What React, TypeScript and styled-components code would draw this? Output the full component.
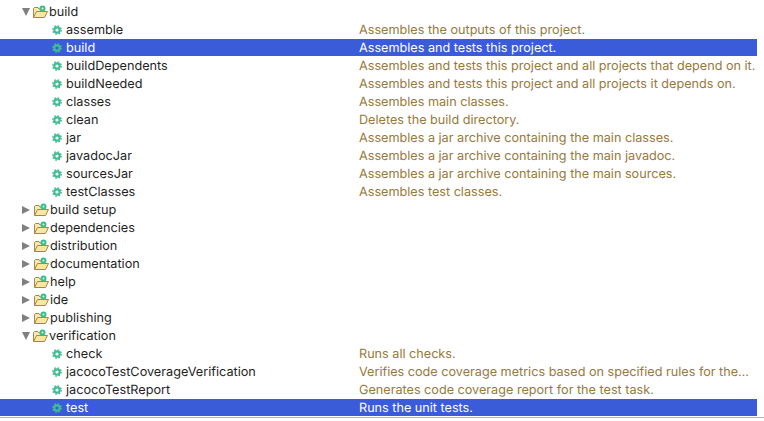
import styled, { createGlobalStyle } from 'styled-components';

const tasks = (items: [string, string][]) => items.map(([name, desc]) => ({ name, desc }));

const groups = [
  {
    name: 'build',
    open: true,
    tasks: tasks([
      ['assemble', 'Assembles the outputs of this project.'],
      ['build', 'Assembles and tests this project.'],
      ['buildDependents', 'Assembles and tests this project and all projects that depend on it.'],
      ['buildNeeded', 'Assembles and tests this project and all projects it depends on.'],
      ['classes', 'Assembles main classes.'],
      ['clean', 'Deletes the build directory.'],
      ['jar', 'Assembles a jar archive containing the main classes.'],
      ['javadocJar', 'Assembles a jar archive containing the main javadoc.'],
      ['sourcesJar', 'Assembles a jar archive containing the main sources.'],
      ['testClasses', 'Assembles test classes.'],
    ]),
  },
  { name: 'build setup', open: false, tasks: [] },
  { name: 'dependencies', open: false, tasks: [] },
  { name: 'distribution', open: false, tasks: [] },
  { name: 'documentation', open: false, tasks: [] },
  { name: 'help', open: false, tasks: [] },
  { name: 'ide', open: false, tasks: [] },
  { name: 'publishing', open: false, tasks: [] },
  {
    name: 'verification',
    open: true,
    tasks: tasks([
      ['check', 'Runs all checks.'],
      ['jacocoTestCoverageVerification', 'Verifies code coverage metrics based on specified rules for the…'],
      ['jacocoTestReport', 'Generates code coverage report for the test task.'],
      ['test', 'Runs the unit tests.'],
    ]),
  },
];

const selected = ['build', 'test'];

const GlobalStyle = createGlobalStyle`
  html, body {
    margin: 0;
    background: #fff;
    overflow: hidden;
  }
`;

const FolderIcon = () => (
  <svg width="17" height="14" viewBox="0 0 17 14">
    <path d="M1.5 12.5V3.5L2.5 2.5h3.5l1 1.5h4v2.5" fill="#f7e8b8" stroke="#a9873f" strokeWidth="1" />
    <path d="M1.5 12.5L4.5 6.5h11l-3 6h-11z" fill="#f8e7a2" stroke="#a9873f" strokeWidth="1" strokeLinejoin="round" />
    <circle cx="10.5" cy="3.5" r="2" fill="#d9f5ea" stroke="#34c08c" strokeWidth="2" />
  </svg>
);

const GearIcon = () => (
  <svg width="10" height="10" viewBox="0 0 10 10">
    <circle cx="5" cy="5" r="2.7" fill="none" stroke="#40bd93" strokeWidth="2.2" />
    <circle cx="5" cy="5" r="4.2" fill="none" stroke="#40bd93" strokeWidth="1.4" strokeDasharray="1.65 1.65" />
  </svg>
);

export default function App() {
  return (
    <>
      <GlobalStyle />
      <Page>
        <Tree>
          {groups.map((group) => (
            <li key={group.name}>
              <Row>
                <NameCell>
                  <Arrow $open={group.open} />
                  <FolderIcon />
                  <GroupLabel>{group.name}</GroupLabel>
                </NameCell>
              </Row>
              {group.tasks.map((task) => (
                <Row key={task.name} $selected={selected.includes(task.name)}>
                  <NameCell $task>
                    <GearIcon />
                    <TaskLabel>{task.name}</TaskLabel>
                  </NameCell>
                  <Description $selected={selected.includes(task.name)}>{task.desc}</Description>
                </Row>
              ))}
            </li>
          ))}
        </Tree>
        <BottomRule />
      </Page>
    </>
  );
}

const Page = styled('div')`
  width: 764px;
  height: 421px;
  box-sizing: border-box;
  padding-top: 2px;
  overflow: hidden;
  font-family: Inter, 'Liberation Sans', Arial, sans-serif;
  font-size: 12.7px;
  text-rendering: geometricPrecision;
  color: #1f1f1f;
`;

const Tree = styled('ul')`
  list-style: none;
  margin: 0 7px 0 0;
  padding: 0;
`;

const BottomRule = styled('div')`
  height: 1px;
  margin-top: 1px;
  background: #b4b4b4;
`;

const Row = styled('div')<{ $selected?: boolean }>`
  display: flex;
  align-items: center;
  height: 18px;
  box-sizing: border-box;
  border-top: 1px solid #fff;
  background: ${(p) => (p.$selected ? '#3a5cd8' : 'transparent')};
  color: ${(p) => (p.$selected ? '#fff' : 'inherit')};
`;

const NameCell = styled('div')<{ $task?: boolean }>`
  display: flex;
  align-items: center;
  flex: 0 0 359px;
  padding-left: ${(p) => (p.$task ? '52px' : '22px')};
  box-sizing: border-box;
  white-space: nowrap;
`;

const Arrow = styled('span')<{ $open: boolean }>`
  width: 0;
  height: 0;
  margin-right: 2px;
  border-style: solid;
  border-color: transparent;
  ${(p) =>
    p.$open
      ? `border-width: 8px 4.5px 0 4.5px; border-top-color: #808080;`
      : `border-width: 4.5px 0 4.5px 8px; border-left-color: #808080; margin-right: 3px;`}
`;

const GroupLabel = styled('span')`
  padding-top: 2px;
`;

const TaskLabel = styled('span')`
  margin-left: 4px;
  padding-top: 2px;
`;

const Description = styled('div')<{ $selected?: boolean }>`
  flex: 1;
  min-width: 0;
  padding-top: 2px;
  font-size: 12.65px;
  white-space: nowrap;
  color: ${(p) => (p.$selected ? '#fff' : '#97793c')};
`;
